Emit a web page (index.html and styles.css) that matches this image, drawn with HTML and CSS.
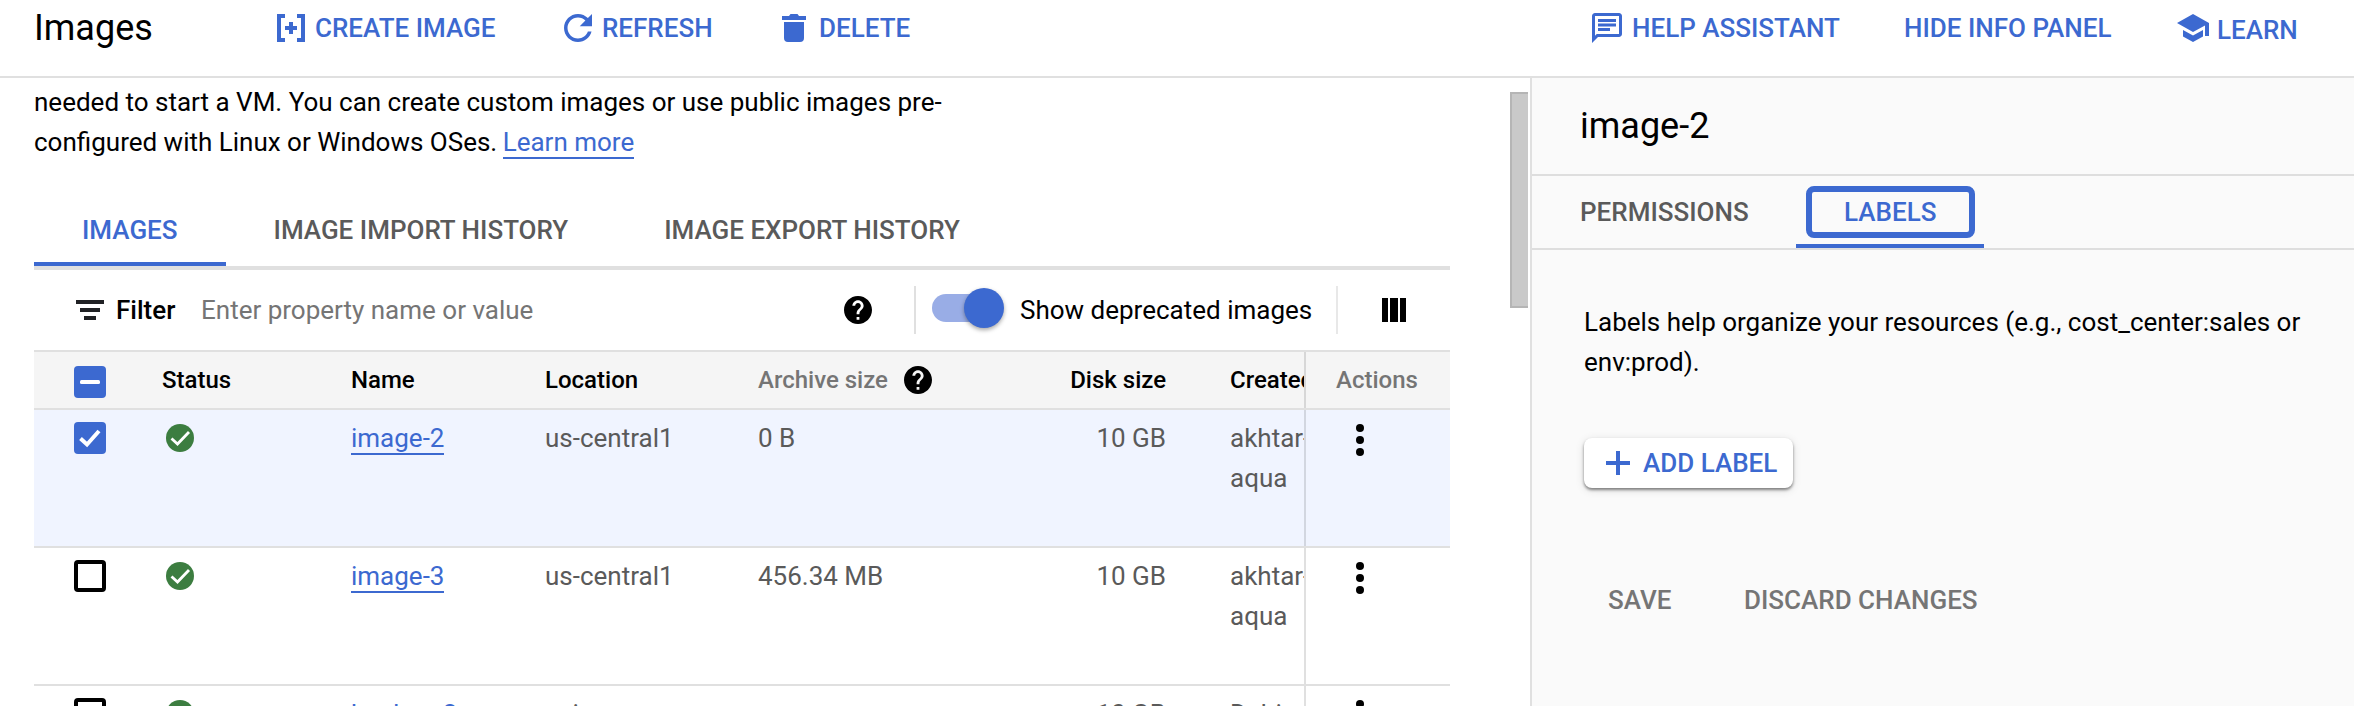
FILE: index.html
```html
<!DOCTYPE html>
<html lang="en">
<head>
<meta charset="utf-8">
<title>Images</title>
<link rel="stylesheet" href="styles.css">
</head>
<body>
<svg class="defs" width="0" height="0">
  <symbol id="help" viewBox="2 2 20 20"><path d="M12 2C6.48 2 2 6.48 2 12s4.48 10 10 10 10-4.48 10-10S17.52 2 12 2zm1 17h-2v-2h2v2zm2.07-7.75-.9.92C13.45 12.9 13 13.5 13 15h-2v-.5c0-1.1.45-2.1 1.17-2.83l1.24-1.26c.37-.36.59-.86.59-1.41 0-1.1-.9-2-2-2s-2 .9-2 2H8c0-2.21 1.79-4 4-4s4 1.79 4 4c0 .88-.36 1.68-.93 2.25z"/></symbol>
  <symbol id="ok" viewBox="0 0 28 28"><circle cx="14" cy="14" r="14" fill="#3c7d40"/><path d="M5.5 14.5l6 5.500L23 8" fill="none" stroke="#fff" stroke-width="2.8"/></symbol>
  <symbol id="more" viewBox="0 0 8 32"><circle cx="4" cy="4" r="4"/><circle cx="4" cy="16" r="4"/><circle cx="4" cy="28" r="4"/></symbol>
</svg>
<header class="topbar">
  <h1 class="title">Images</h1>
  <a class="action create"><svg width="28" height="28" viewBox="0 0 28 28"><path d="M0 0h8v4H4v20h4v4H0zM20 0h8v28h-8v-4h4V4h-4zM12 8h4v4h4v4h-4v4h-4v-4H8v-4h4z"/></svg><span>CREATE IMAGE</span></a>
  <a class="action refresh"><svg width="28" height="28" viewBox="4 4 16 16"><path d="M17.65 6.35C16.2 4.9 14.21 4 12 4c-4.42 0-7.99 3.58-7.99 8s3.57 8 7.99 8c3.73 0 6.84-2.55 7.73-6h-2.08c-.82 2.33-3.04 4-5.65 4-3.31 0-6-2.69-6-6s2.69-6 6-6c1.66 0 3.14.69 4.22 1.78L13 11h7V4l-2.35 2.35z"/></svg><span>REFRESH</span></a>
  <a class="action delete"><svg width="24" height="28" viewBox="0 0 24 28"><path d="M0 2h7l1.500-2h7L17 2h7v4H0zM2 8h20v16a4 4 0 0 1-4 4H6a4 4 0 0 1-4-4z"/></svg><span>DELETE</span></a>
  <a class="action assistant"><svg width="30" height="30" viewBox="2 2 20 20"><path d="M4 4h16v12H5.17L4 17.17V4m0-2c-1.100 0-1.990.9-1.990 2L2 22l4-4h14c1.100 0 2-.9 2-2V4c0-1.100-.9-2-2-2H4zm2 10h8v2H6v-2zm0-3h12v2H6V9zm0-3h12v2H6V6z"/></svg><span>HELP ASSISTANT</span></a>
  <a class="action hide"><span>HIDE INFO PANEL</span></a>
  <a class="action learn"><svg width="32" height="28" viewBox="0 0 32 28"><path d="M0 9L16 0l16 9v13h-4V11.500L16 18zM6 16l10 5.500L26 16v6.500L16 28 6 22.500z"/></svg><span>LEARN</span></a>
</header>
<div class="body">
  <main class="main">
    <p class="intro">needed to start a VM. You can create custom images or use public images pre-<br>configured with Linux or Windows OSes. <a class="link more">Learn more</a></p>
    <nav class="tabs">
      <a class="tab active">IMAGES</a><a class="tab">IMAGE IMPORT HISTORY</a><a class="tab">IMAGE EXPORT HISTORY</a>
    </nav>
    <div class="filter">
      <svg class="filter-icon" width="28" height="20" viewBox="0 0 28 20"><path d="M0 0h28v4H0zM4 8h20v4H4zM8 16h12v4H8z"/></svg>
      <b class="filter-label">Filter</b>
      <span class="placeholder">Enter property name or value</span>
      <svg class="help" width="28" height="28"><use href="#help"/></svg>
      <div class="toggle-cell">
        <span class="toggle"><i class="thumb"></i></span>
        <span class="toggle-label">Show deprecated images</span>
      </div>
      <div class="columns-cell"><svg width="24" height="24" viewBox="0 0 24 24"><path d="M0 0h6v24H0zM8 0h8v24H8zM18 0h6v24h-6z"/></svg></div>
    </div>
    <div class="grid">
      <div class="row head">
        <div class="check"><svg width="32" height="32" viewBox="0 0 32 32"><rect width="32" height="32" rx="4" fill="#3c69d0"/><rect x="6" y="14" width="20" height="4" rx="1.500" fill="#fff"/></svg></div>
        <div>Status</div><div>Name</div><div>Location</div>
        <div class="archive">Archive size<svg width="28" height="28"><use href="#help"/></svg></div>
        <div class="num">Disk size</div><div class="creator">Created</div><div class="actions">Actions</div>
      </div>
      <div class="row selected">
        <div class="check"><svg width="32" height="32" viewBox="0 0 32 32"><rect width="32" height="32" rx="4" fill="#3c69d0"/><path d="M6.500 16.500l6.500 6L25 9" fill="none" stroke="#fff" stroke-width="4"/></svg></div>
        <div class="status"><svg width="28" height="28"><use href="#ok"/></svg></div>
        <div><a class="link">image-2</a></div><div>us-central1</div><div>0 B</div><div class="num">10 GB</div><div class="creator">akhtar-<br>aqua</div>
        <div class="actions"><svg width="8" height="32"><use href="#more"/></svg></div>
      </div>
      <div class="row">
        <div class="check"><span class="box"></span></div>
        <div class="status"><svg width="28" height="28"><use href="#ok"/></svg></div>
        <div><a class="link">image-3</a></div><div>us-central1</div><div>456.34 MB</div><div class="num">10 GB</div><div class="creator">akhtar-<br>aqua</div>
        <div class="actions"><svg width="8" height="32"><use href="#more"/></svg></div>
      </div>
      <div class="row last">
        <div class="check"><span class="box"></span></div>
        <div class="status"><svg width="28" height="28"><use href="#ok"/></svg></div>
        <div><a class="link">backup-2</a></div><div>asia</div><div></div><div class="num">10 GB</div><div class="creator">Debian</div>
        <div class="actions"><svg width="8" height="32"><use href="#more"/></svg></div>
      </div>
    </div>
  </main>
  <div class="scroll"><div class="scroll-thumb"></div></div>
  <aside class="panel">
    <h2 class="panel-title">image-2</h2>
    <nav class="panel-tabs"><a class="ptab">PERMISSIONS</a><a class="ptab current"><span>LABELS</span></a></nav>
    <p class="panel-text">Labels help organize your resources (e.g., cost_center:sales or<br>env:prod).</p>
    <button class="add"><svg width="24" height="24" viewBox="0 0 24 24"><path d="M10 0h4v10h10v4H14v10h-4V14H0v-4h10z"/></svg><span>ADD LABEL</span></button>
    <div class="buttons"><span class="save">SAVE</span><span>DISCARD CHANGES</span></div>
  </aside>
</div>
</body>
</html>
```
FILE: styles.css
```css
* { box-sizing: border-box; }
body { margin: 0; width: 2354px; height: 706px; overflow: hidden; background: #fff; color: #000; font: 26px/40px Roboto, sans-serif; }
svg { display: block; flex: none; fill: currentColor; }
h1, h2, p { margin: 0; font-weight: 400; }
.defs { position: absolute; }

.topbar { display: flex; align-items: center; height: 78px; padding: 0 0 20px 34px; border-bottom: 2px solid #e0e0e0; white-space: nowrap; }
.title { width: 243px; font-size: 36px; }
.action { display: flex; align-items: center; gap: 10px; color: #3c69d0; font-weight: 500; }
.create { width: 287px; }
.refresh { width: 218px; }
.delete { width: 810px; gap: 13px; }
.assistant { width: 312px; }
.hide { width: 273px; }
.learn { gap: 8px; }
.learn span { padding-top: 3px; }

.body { display: flex; height: 628px; overflow: hidden; }
.main { width: 1450px; padding: 4px 0 0 34px; flex: none; }
.link { color: #3c69d0; border-bottom: 2px solid #3c69d0; }
.more { margin-left: -1px; }
.tabs { display: flex; height: 108px; padding-top: 48px; border-bottom: 4px solid #e0e0e0; color: #5a5a5a; font-weight: 500; white-space: nowrap; }
.tab { padding: 0 48px; border-bottom: 4px solid transparent; }
.active { color: #3c69d0; border-color: #3c69d0; }

.filter { display: flex; align-items: center; height: 80px; padding-left: 42px; white-space: nowrap; }
.filter-icon { color: #202124; margin-right: 12px; }
.filter-label { width: 85px; font-weight: 500; }
.placeholder { width: 643px; color: #757575; }
.help { margin-right: 42px; }
.toggle-cell { display: flex; align-items: center; width: 422px; height: 48px; border-left: 2px solid #e0e0e0; padding-left: 16px; }
.toggle { width: 68px; height: 28px; border-radius: 14px; background: #99ade6; display: flex; justify-content: flex-end; align-items: center; margin: -4px 20px 0 0; }
.thumb { flex: none; width: 40px; height: 40px; margin-right: -4px; border-radius: 50%; background: #3c69d0; box-shadow: 0 2px 4px rgba(0,0,0,.35); }
.columns-cell { display: flex; align-items: center; height: 48px; padding-left: 44px; border-left: 2px solid #e8e8e8; }

.grid { border-top: 2px solid #e0e0e0; }
.row { display: grid; grid-template-columns: 128px 189px 194px 213px 250px 222px 74px 146px; height: 138px; border-bottom: 2px solid #e0e0e0; color: #5a5a5a; white-space: nowrap; }
.row > div { padding-top: 8px; }
.row > .check { padding: 12px 0 0 40px; }
.row > .status { padding: 14px 0 0 4px; }
.row > .num { text-align: right; padding-right: 64px; }
.creator { overflow: hidden; }
.row > .actions { border-left: 2px solid rgba(0,0,0,.12); padding: 14px 0 0 50px; color: #000; }
.selected { background: #f0f4ff; }
.head { height: 58px; background: #f5f5f5; color: #000; font-size: 24px; font-weight: 500; }
.head > .check { padding-top: 14px; }
.row.head > .actions { padding: 8px 0 0 30px; color: #757575; }
.head .archive { display: flex; gap: 16px; color: #757575; }
.archive svg { color: #000; margin-top: 6px; }
.last { height: 20px; border-bottom: 0; }
.box { display: block; width: 32px; height: 32px; border: 4px solid #000; border-radius: 4px; }

.scroll { width: 80px; padding: 14px 2px 0 60px; flex: none; }
.scroll-thumb { height: 216px; background: #c9c9c9; border: 2px solid #b5b5b5; border-right: 0; }

.panel { flex: 1; background: #fafafa; border-left: 2px solid #e0e0e0; white-space: nowrap; }
.panel-title { height: 98px; padding: 28px 48px 0; font-size: 36px; border-bottom: 2px solid #dedede; }
.panel-tabs { display: flex; height: 74px; border-bottom: 2px solid #dedede; color: #5a5a5a; font-weight: 500; }
.ptab { width: 264px; padding: 16px 0 0 48px; }
.current { width: 188px; padding: 10px 9px 0 10px; color: #3c69d0; border-bottom: 4px solid #3c69d0; }
.current span { display: block; height: 52px; padding-left: 32px; border: 6px solid #3c69d0; border-radius: 8px; }
.panel-text { padding: 52px 0 56px 52px; }
.add { display: flex; align-items: center; gap: 13px; width: 209px; height: 50px; margin-left: 52px; padding: 0 0 0 22px; border: 0; border-radius: 8px; background: #fff; color: #3c69d0; font: 500 26px/40px Roboto, sans-serif; box-shadow: 0 2px 3px rgba(0,0,0,.45), 0 2px 10px rgba(0,0,0,.12); }
.buttons { display: flex; padding: 92px 0 0 76px; color: #757575; font-weight: 500; }
.save { width: 136px; }
```
